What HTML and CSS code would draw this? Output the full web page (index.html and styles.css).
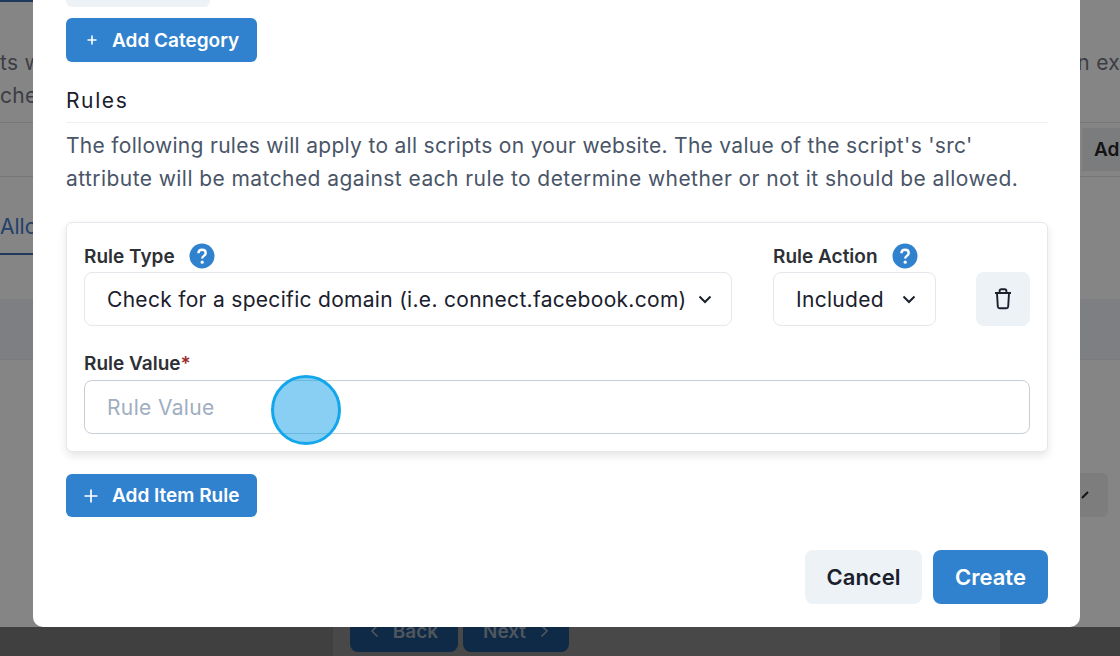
FILE: index.html
```html
<!DOCTYPE html>
<html lang="en">
<head>
<meta charset="utf-8">
<title>Create category</title>
<link rel="stylesheet" href="styles.css">
</head>
<body>
<div class="page">
  <div class="bg">
    <div class="bg-main">
      <div class="bg-topline"></div>
      <div class="bg-text bg-text-first"><span>ts w</span><span>n ex</span></div>
      <div class="bg-text"><span>che</span></div>
      <div class="bg-action-row"><span class="bg-add">Ad</span></div>
      <div class="bg-tab"><span>Allo</span></div>
      <div class="bg-band"></div>
      <div class="bg-select-row"><div class="bg-select"><svg class="bg-chev" width="8" height="8" viewBox="0 0 8 8"><path d="M1 7 7 1" fill="none" stroke="#141414" stroke-width="2"/></svg></div></div>
    </div>
    <div class="bg-footer">
      <div class="bg-btn bg-btn-back"><svg class="bg-arrow" width="9" height="14" viewBox="0 0 9 14"><path d="M7.500 1.500 2 7l5.500 5.500" fill="none" stroke="currentColor" stroke-width="1.600"/></svg><span>Back</span></div>
      <div class="bg-btn bg-btn-next"><span>Next</span><svg class="bg-arrow" width="9" height="14" viewBox="0 0 9 14"><path d="M1.500 1.500 7 7l-5.500 5.500" fill="none" stroke="currentColor" stroke-width="1.600"/></svg></div>
    </div>
  </div>

  <div class="modal">
    <div class="stub"></div>
    <button class="btn btn-primary btn-add btn-add-cat">
      <svg class="plus-sm" width="12" height="12" viewBox="0 0 12 12"><path d="M6 1.500v9M1.500 6h9" stroke="currentColor" stroke-width="1.600" fill="none"/></svg>
      <span>Add Category</span>
    </button>
    <h2 class="section-title">Rules</h2>
    <p class="section-text"><span class="line line-a">The following rules will apply to all scripts on your website. The value of the script's 'src'</span> <span class="line line-b">attribute will be matched against each rule to determine whether or not it should be allowed.</span></p>

    <div class="card">
      <div class="rule-row">
        <div class="field field-type">
          <div class="label-row"><label>Rule Type</label>
            <svg class="help" width="26" height="26" viewBox="0 0 26 26"><circle cx="13" cy="13" r="12.500" fill="#3182ce"/><path d="M9.400 10.300c0-2.200 1.600-3.500 3.700-3.500s3.600 1.300 3.600 3.200c0 2.900-3.500 2.800-3.500 5.400" fill="none" stroke="#fff" stroke-width="2.400"/><circle cx="13.200" cy="19.200" r="1.600" fill="#fff"/></svg>
          </div>
          <div class="select"><span>Check for a specific domain (i.e. connect.facebook.com)</span>
            <svg class="chev" width="14" height="9" viewBox="0 0 14 9"><path d="M1.500 1.500 7 7l5.500-5.500" fill="none" stroke="#1a202c" stroke-width="2"/></svg>
          </div>
        </div>
        <div class="field field-action">
          <div class="label-row"><label>Rule Action</label>
            <svg class="help" width="26" height="26" viewBox="0 0 26 26"><circle cx="13" cy="13" r="12.500" fill="#3182ce"/><path d="M9.400 10.300c0-2.200 1.600-3.500 3.700-3.500s3.600 1.300 3.600 3.200c0 2.900-3.500 2.800-3.500 5.400" fill="none" stroke="#fff" stroke-width="2.400"/><circle cx="13.200" cy="19.200" r="1.600" fill="#fff"/></svg>
          </div>
          <div class="select"><span>Included</span>
            <svg class="chev" width="14" height="9" viewBox="0 0 14 9"><path d="M1.500 1.500 7 7l5.500-5.500" fill="none" stroke="#1a202c" stroke-width="2"/></svg>
          </div>
        </div>
        <button class="btn-trash" aria-label="Delete">
          <svg width="20" height="22" viewBox="0 0 20 22"><path d="M2 5h16M4 5l.8 13.500c.1 1 .8 1.700 1.800 1.700h6.800c1 0 1.700-.7 1.800-1.700L16 5M6.600 5V3c0-1 .7-1.700 1.700-1.700h3.400c1 0 1.700.7 1.700 1.700v2" fill="none" stroke="#1a202c" stroke-width="1.900"/></svg>
        </button>
      </div>
      <div class="field field-value">
        <label>Rule Value<span class="req">*</span></label>
        <input class="input" type="text" placeholder="Rule Value">
      </div>
    </div>

    <button class="btn btn-primary btn-add btn-add-rule">
      <svg class="plus-lg" width="16" height="16" viewBox="0 0 16 16"><path d="M8 1.500v13M1.500 8h13" stroke="currentColor" stroke-width="1.700" fill="none"/></svg>
      <span>Add Item Rule</span>
    </button>

    <div class="actions">
      <button class="btn btn-large btn-cancel">Cancel</button>
      <button class="btn btn-large btn-primary btn-create">Create</button>
    </div>
  </div>

  <div class="cursor"></div>
</div>
</body>
</html>
```

FILE: styles.css
```css
* { box-sizing: border-box; }
html, body { margin: 0; padding: 0; }
body { font-family: Inter, "Liberation Sans", sans-serif; overflow: hidden; }

.page { position: relative; width: 1120px; height: 656px; overflow: hidden; background: #858585; }

/* dimmed page behind the dialog */
.bg { display: flex; flex-direction: column; height: 656px; }
.bg-main { flex: 0 0 627px; background: #858585; }
.bg-topline { width: 33px; height: 2px; background: #1f3a5c; }
.bg-text { display: flex; justify-content: space-between; height: 33px; line-height: 33px; font-size: 21px; letter-spacing: .3px; color: #3c3d44; }
.bg-text-first { margin-top: 44px; }
.bg-action-row { margin-top: 10px; height: 55px; border-top: 1px solid #767676; border-bottom: 1px solid #767676; display: flex; justify-content: flex-end; align-items: center; }
.bg-add { display: block; width: 38px; height: 43px; line-height: 43px; padding-left: 12px; background: #7b7c7e; font-size: 19px; font-weight: 600; color: #141414; overflow: hidden; }
.bg-tab { width: 33px; height: 78px; padding-top: 33px; line-height: 33px; font-size: 21px; color: #22406a; border-bottom: 2px solid #1f3a5c; white-space: nowrap; }
.bg-band { height: 61px; margin-top: 44px; background: #7e7f82; border-bottom: 1px solid #7a7a7a; }
.bg-select-row { display: flex; justify-content: flex-end; padding: 113px 12px 0 0; }
.bg-select { width: 60px; height: 44px; border-radius: 6px; background: #7d7d7e; padding: 18px 0 0 33px; }
.bg-chev { display: block; }
.bg-footer { flex: 0 0 29px; min-height: 0; background: linear-gradient(90deg, #404040 333px, #484848 333px, #484848 1000px, #404040 1000px); display: flex; gap: 5px; padding-left: 350px; align-items: flex-end; padding-bottom: 4px; }
.bg-btn { flex: none; width: 108px; height: 42px; border-radius: 8px; background: #0e2a47; color: #50565d; font-size: 19px; font-weight: 600; display: flex; align-items: center; justify-content: center; gap: 14px; }
.bg-btn-next { width: 106px; }

/* dialog */
.modal { position: absolute; left: 33px; top: 0; width: 1047px; height: 627px; background: #fff; border-radius: 0 0 10px 10px; padding: 0 32px 0 33px; overflow: hidden; }
.stub { width: 144px; height: 7px; background: #edf2f7; border-radius: 0 0 6px 6px; }

.btn { font-family: inherit; border: 0; display: flex; align-items: center; justify-content: center; cursor: pointer; }
.btn-primary { background: #3182ce; color: #fff; }
.btn-add { width: 191px; height: 44px; border-radius: 6px; font-size: 19px; font-weight: 600; padding: 0 17px; justify-content: flex-start; }
.btn-add-cat { margin-top: 11px; }
.plus-sm { margin: 0 14px 0 3px; }
.plus-lg { margin: 0 13px 0 0; }

.section-title { margin: 27px 0 0; font-size: 21px; line-height: 24px; font-weight: 400; letter-spacing: 1.600px; color: #1a202c; padding-bottom: 9px; border-bottom: 1px solid #edf0f4; }
.section-text { margin: 6px 0 0; font-size: 21px; line-height: 33px; color: #4a5568; }
.line { display: block; white-space: nowrap; }
.line-a { letter-spacing: .3px; }
.line-b { letter-spacing: .43px; }

.card { margin-top: 27px; width: 982px; height: 230px; border: 1px solid #e4e7eb; border-radius: 6px; padding: 19px 17px 0; box-shadow: 0 4px 8px rgba(0,0,0,.1); background: #fff; }
.rule-row { display: flex; align-items: flex-end; }
.field label { font-size: 19px; font-weight: 600; color: #2d3035; line-height: 26px; }
.label-row { display: flex; align-items: center; gap: 14px; height: 27px; margin-bottom: 3px; }
.label-row label { padding-top: 2px; }
.field-type { width: 648px; }
.field-action { width: 163px; margin-left: 41px; }
.help { display: block; }
.select { height: 54px; border: 1px solid #e4e7eb; border-radius: 8px; display: flex; align-items: center; justify-content: space-between; padding: 0 19px 0 22px; font-size: 21px; letter-spacing: .3px; color: #1a202c; white-space: nowrap; }
.btn-trash { margin-left: 40px; width: 54px; height: 54px; border: 0; border-radius: 8px; background: #edf2f7; display: flex; align-items: center; justify-content: center; padding: 0; }
.field-value { margin-top: 25px; }
.field-value label { display: block; height: 26px; margin-bottom: 3px; }
.req { color: #9b2c2c; }
.input { display: block; width: 946px; height: 54px; border: 1px solid #c6ced6; border-radius: 8px; padding: 0 22px; font-family: inherit; font-size: 21px; letter-spacing: .35px; color: #1a202c; background: #fff; outline: 0; }
.input::placeholder { color: #a0aec0; opacity: 1; }

.btn-add-rule { margin-top: 22px; height: 43px; }

.actions { display: flex; justify-content: flex-end; gap: 11px; margin-top: 33px; }
.btn-large { height: 54px; border-radius: 8px; font-size: 22px; font-weight: 600; }
.btn-cancel { width: 117px; background: #edf2f7; color: #1a202c; }
.btn-create { width: 115px; }

/* recording cursor highlight */
.cursor { position: absolute; left: 271px; top: 375px; width: 70px; height: 70px; border-radius: 50%; border: 3px solid #12a7ea; background: rgba(18,160,232,.5); }
```
